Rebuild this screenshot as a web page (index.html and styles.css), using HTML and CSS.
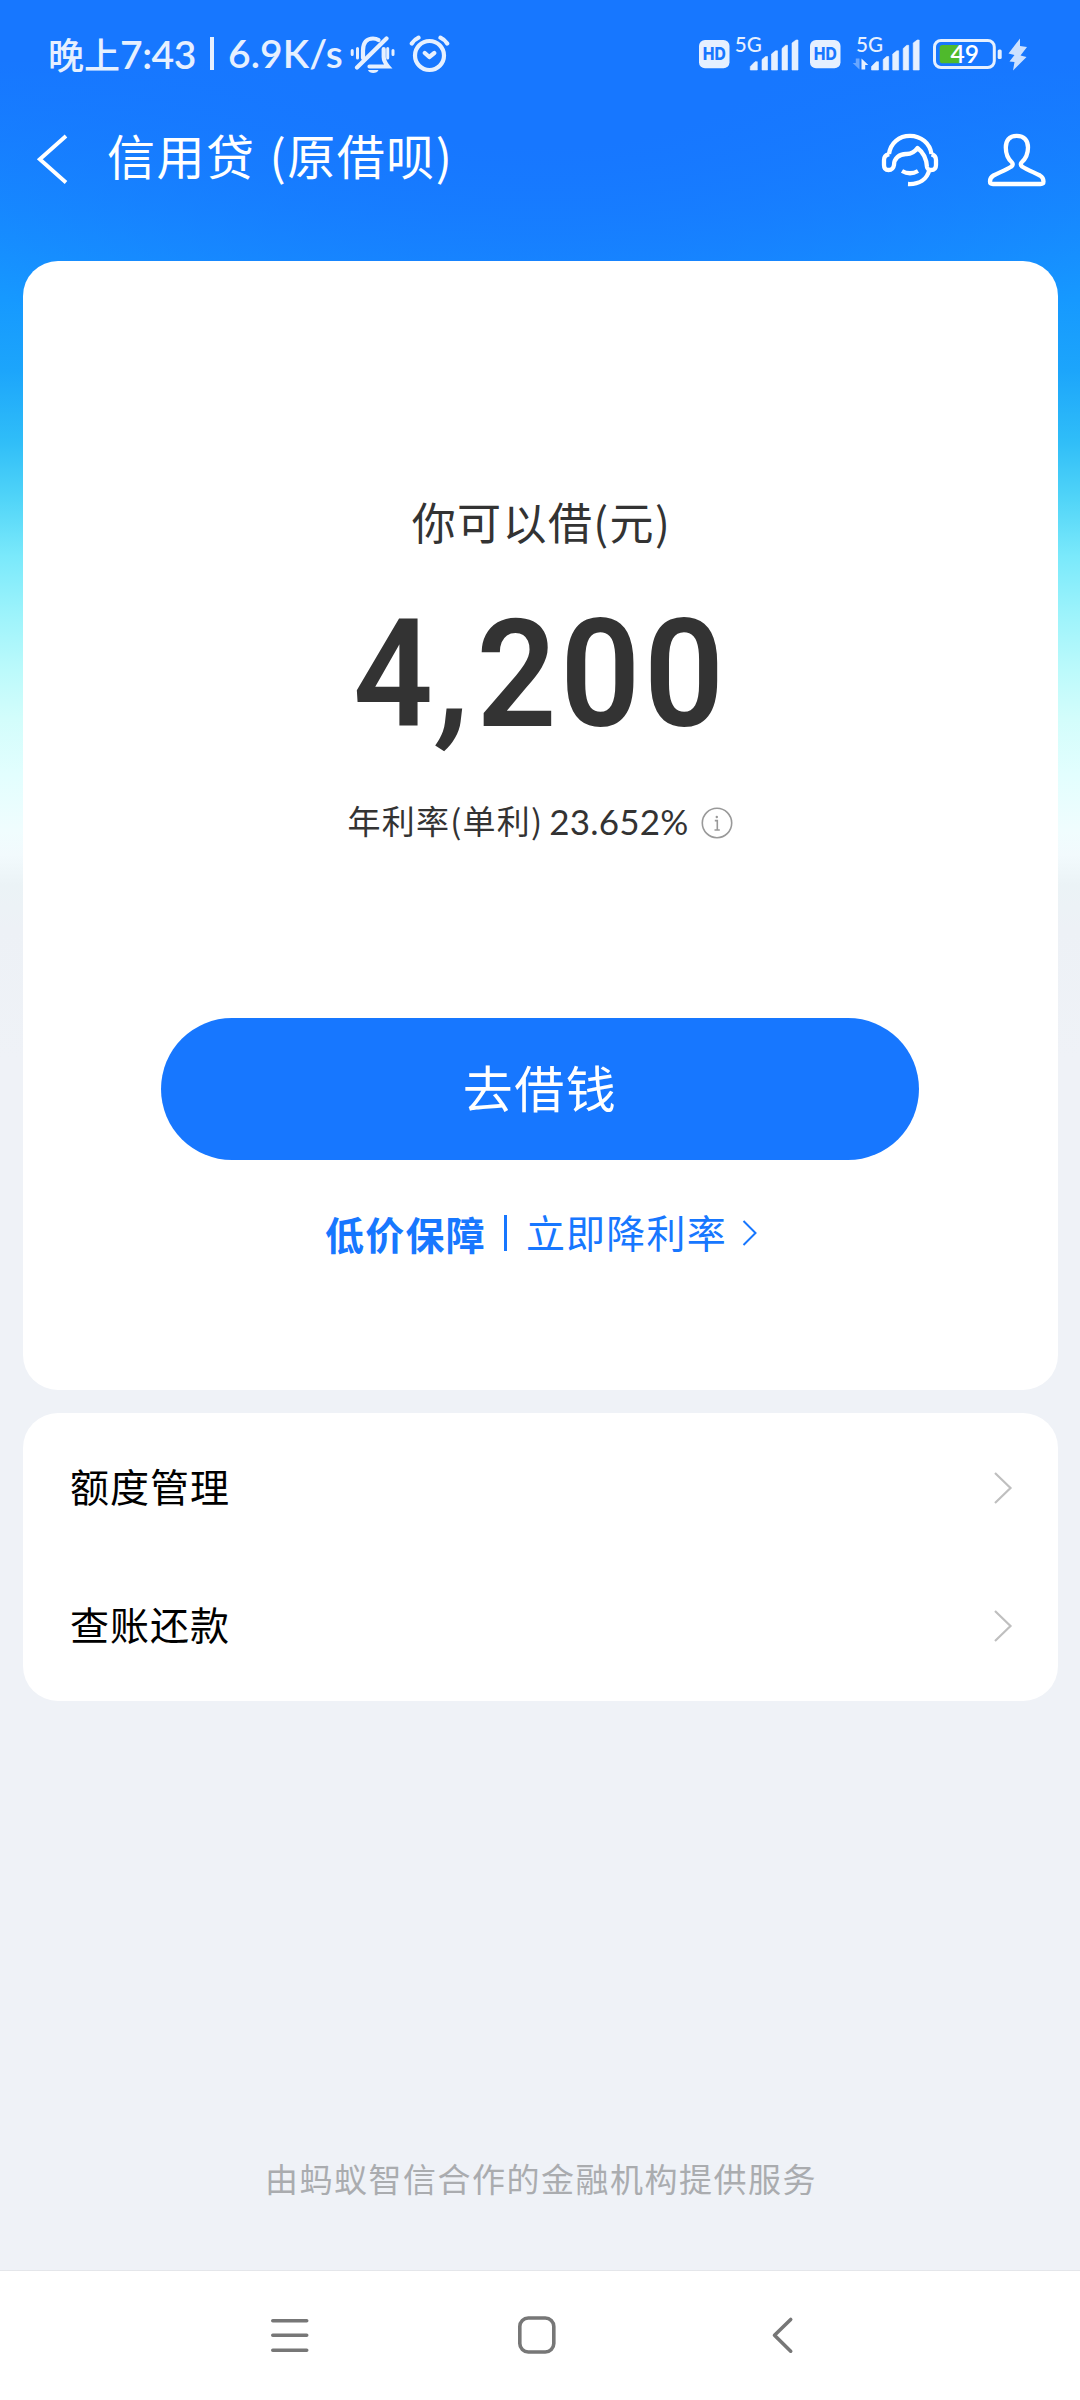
FILE: index.html
```
<!DOCTYPE html>
<html lang="zh-CN">
<head>
<meta charset="utf-8">
<title>信用贷 (原借呗)</title>
<link rel="stylesheet" href="styles.css">
</head>
<body>
<div class="screen">
  <div class="status">
    <span class="time">晚上<b class="clock">7:43</b></span>
    <i class="status-bar"></i>
    <span class="speed">6.9K/s</span>
    <svg class="mute" width="45" height="38" viewBox="350 36 45 38" fill="none" stroke="#e6f0ff" stroke-width="4.200" stroke-linecap="round">
      <path d="M352.200 50.500V54.500M357.500 48.500V58M387.700 48.500V58M393 50.500V54.500" stroke-width="3"/>
      <path d="M357 67.500L386.500 38.500"/>
      <path d="M363 58V50.500C363 42.500 367 38.500 373 38.500C375 38.500 377 39 378.500 40M383.700 49V57C383.700 61 385.500 63.500 388 66.500H369.500"/>
      <path d="M368 70H378.500C377.500 74 369 74 368 70Z" fill="#e6f0ff" stroke="none"/>
    </svg>
    <svg class="alarm" width="41" height="39" viewBox="409 35 41 39" fill="none" stroke="#e6f0ff" stroke-width="4.200" stroke-linecap="round" stroke-linejoin="round">
      <circle cx="429.500" cy="55.500" r="14.500"/>
      <path d="M411.800 43.500Q414.500 39.500 418.500 37.700M447.200 43.500Q444.500 39.500 440.500 37.700M424.800 53L429.300 57L434.300 53"/>
    </svg>
    <svg class="indicators" width="330" height="46" viewBox="699 30 330 46">
      <g fill="#e6f0ff">
        <rect x="699" y="40" width="30.500" height="28.200" rx="6"/>
        <rect x="810" y="40" width="30.500" height="28.200" rx="6"/>
        <g id="bars">
          <path d="M750.300 70V66.500L755 61.700H757.300V70ZM762 70V59.500L765.500 56.500H767.500V70ZM771.500 70V54L775.500 50.800H777.500V70ZM782 70V48.500L785.500 45.300H787.500V70ZM792 70V43L796 40H798V70Z" stroke="#e6f0ff" stroke-width=".6" stroke-linejoin="round"/>
        </g>
        <use href="#bars" x="121.200"/>
        <path d="M861.500 58.500L868.300 65H865.200V69.500H861.500Z"/>
        <path d="M859.500 69.500L852.700 63H855.800V58.500H859.500Z" opacity=".4"/>
        <rect x="997.700" y="49.500" width="4" height="9.500" rx="1.500"/>
        <path d="M1020 38.500L1008.500 53.500L1014.500 55L1009.500 61.500L1014.500 62L1013 70.500L1026.500 57L1020.500 55.500L1027 47L1020 46Z" opacity=".88"/>
      </g>
      <rect x="934.500" y="40.500" width="59.800" height="27" rx="6.500" fill="none" stroke="#e6f0ff" stroke-width="3"/>
      <path d="M960 45V63.200H942.500Q939.700 63.200 939.700 60.400V47.800Q939.700 45 942.500 45Z" fill="#4fba2c"/>
      <text class="hd" x="702.700" y="60" textLength="23" lengthAdjust="spacingAndGlyphs">HD</text>
      <text class="hd" x="813.700" y="60" textLength="23" lengthAdjust="spacingAndGlyphs">HD</text>
      <text class="net" x="734.800" y="52.300" textLength="27" lengthAdjust="spacingAndGlyphs">5G</text>
      <text class="net" x="856" y="52.300" textLength="27" lengthAdjust="spacingAndGlyphs">5G</text>
      <text class="level" x="950.500" y="63" textLength="28.500" lengthAdjust="spacingAndGlyphs">49</text>
    </svg>
  </div>

  <header class="nav">
    <svg class="nav-back" width="32" height="52" viewBox="36 133 32 52" fill="none" stroke="#fff" stroke-width="3.900"><path d="M66 136L39.800 159.300L66 182.500"/></svg>
    <h1 class="nav-title">信用贷<span class="nav-alias">(原借呗)</span></h1>
    <svg class="service" width="60" height="56" viewBox="880 132 60 56" fill="none" stroke="#fff" stroke-width="4.300" stroke-linejoin="round">
      <path d="M889 154C890.500 143 899 135.800 910 135.800C921 135.800 930 143.500 931.500 154"/>
      <path d="M889.500 154.300H888.500Q884 155.500 884 160V165Q884 170 888.500 170Q893.200 170 894 165C894 158.500 899 154 906 154C912 154.300 915 151.500 917.500 148C923.500 152.500 926.500 159 927 167Q927.500 170 931 170Q936 170 936 165V160Q936 155.500 931.500 154.300"/>
      <path d="M902 171Q910 175.500 918 171M929.300 170C927 179.500 919 184.500 908 184"/>
    </svg>
    <svg class="person" width="60" height="56" viewBox="987 132 60 56" fill="none" stroke="#fff" stroke-width="4.300" stroke-linejoin="round">
      <path d="M1016.700 135.800C1009 135.800 1005.800 141 1005.800 147.500C1005.800 154.500 1008 159 1012 162.500Q1013.500 164.500 1011.500 166.500C1005 170.500 999 172.500 993.500 175.500C990.800 177 990 179.500 990 181.500Q990 184 993 184H1040.500Q1043.500 184 1043.500 181.500C1043.500 179 1042.500 177 1040 175.500C1034.500 172.500 1028.500 170.500 1022 166.500Q1020 164.500 1021.500 162.500C1025.500 159 1028 154.500 1028 147.500C1028 141 1024.500 135.800 1016.700 135.800Z"/>
    </svg>
  </header>

  <main class="content">
    <section class="card loan">
      <p class="loan-label">你可以借(元)</p>
      <p class="loan-amount">4<span class="comma">,</span>200</p>
      <p class="rate"><span class="rate-name">年利率(单利)</span><span class="rate-value">23.652%</span>
        <svg class="info" width="32" height="32" viewBox="0 0 32 32" fill="none" stroke="#999" stroke-width="1.600"><circle cx="16" cy="16" r="14.700"/><path d="M13.800 13.600H16.300V23M13.500 23H18.800"/><circle cx="15.800" cy="10" r="1.200" fill="#999" stroke="none"/></svg>
      </p>
      <button class="borrow" type="button">去借钱</button>
      <a class="promo"><strong class="promo-tag">低价保障</strong><i class="promo-divider"></i><span class="promo-text">立即降利率</span>
        <svg class="promo-arrow" width="16" height="28" viewBox="0 0 16 28" fill="none" stroke="#1777ff" stroke-width="2"><path d="M1.500 2L13.500 14L1.500 26"/></svg>
      </a>
    </section>
    <section class="card menu">
      <a class="menu-row"><span>额度管理</span><svg width="20" height="34" viewBox="0 0 20 34" fill="none" stroke="#bfbfbf" stroke-width="2.200"><path d="M2 2L17.500 17L2 32"/></svg></a>
      <a class="menu-row"><span>查账还款</span><svg width="20" height="34" viewBox="0 0 20 34" fill="none" stroke="#bfbfbf" stroke-width="2.200"><path d="M2 2L17.500 17L2 32"/></svg></a>
    </section>
    <p class="provider">由蚂蚁智信合作的金融机构提供服务</p>
  </main>

  <footer class="system">
    <svg width="1080" height="50" viewBox="0 2310 1080 50" fill="none" stroke="#777" stroke-width="3.600" stroke-linecap="round" stroke-linejoin="round">
      <path d="M272.800 2320.700H306.700M272.800 2335.300H306.700M272.800 2350.300H306.700"/>
      <rect x="519.800" y="2318" width="34" height="34" rx="8.500"/>
      <path d="M790.700 2319.500L774.500 2335.300L790.700 2351.200"/>
    </svg>
  </footer>
</div>
</body>
</html>
```
FILE: styles.css
```
* { box-sizing: border-box; margin: 0; padding: 0; }

body {
  font-family: "Noto Sans CJK SC", sans-serif;
  color: #333;
  background: #eff2f7;
}

.screen {
  width: 1080px;
  height: 2400px;
  display: flex;
  flex-direction: column;
  background:
    radial-gradient(ellipse 760px 420px at 50% 0, #1777ff 0, #1777ff 35%, rgba(23, 119, 255, 0) 100%) no-repeat 0 0 / 1080px 430px,
    linear-gradient(180deg, #1777ff 0, #1777ff 60px, #168cff 210px, #1699ff 300px, #1ca5fb 370px, #2fbdf8 440px, #50d4f8 498px, #7ae9fb 556px, #9cf3fb 613px, #bcfafb 671px, #d2fdfb 717px, #e2fefe 774px, #f0fdfe 831px, #f2fafd 855px, #ebf3f6 885px, #edf1f6 930px, #eff2f7 1060px, #eff2f7 100%);
}

/* System status bar */
.status {
  height: 105px;
  padding: 35px 51px 0 48px;
  display: flex;
  align-items: flex-start;
  color: #e6f0ff;
}
.time, .speed {
  font: 500 36px/36px "Noto Sans CJK SC", sans-serif;
  white-space: nowrap;
}
.time { width: 162px; }
.clock, .speed { font-family: Lato, sans-serif; font-size: 39px; font-weight: 600; }
.clock { letter-spacing: -0.5px; }
.speed { width: 121px; margin-left: 14px; letter-spacing: 0.1px; }
.status-bar { width: 4px; height: 33px; margin-top: 2px; background: #e6f0ff; }
.mute { margin: 1px 0 0 1px; }
.alarm { margin-left: 14px; }
.indicators { margin: -5px 0 0 auto; }
.hd { font: 800 17px Inter, sans-serif; fill: #1777ff; }
.net { font: 500 21px Lato, sans-serif; fill: #e6f0ff; }
.level { font: 600 25px Lato, sans-serif; fill: #fff; }

/* Title bar */
.nav {
  height: 156px;
  padding: 28px 33px 0 36px;
  display: flex;
  align-items: flex-start;
  color: #fff;
}
.nav-title {
  margin: -11px 0 0 39px;
  font-size: 48px;
  line-height: 64px;
  font-weight: 400;
  letter-spacing: 1.5px;
  white-space: nowrap;
}
.nav-alias { margin-left: 14px; }
.service { margin: -1px 0 0 auto; }
.person { margin: -1px 0 0 47px; }

.content {
  flex: 1;
  padding: 0 22px 0 23px;
  display: flex;
  flex-direction: column;
}
.card { border-radius: 35px; background: #fff; }

/* Borrowing limit */
.loan {
  height: 1129px;
  padding-top: 229px;
  display: flex;
  flex-direction: column;
  align-items: center;
}
.loan-label { margin-left: 2px; font-size: 44px; line-height: 62px; letter-spacing: 1.4px; }
.loan-amount {
  margin-top: 43px;
  font: 600 150px/160px Roboto, sans-serif;
  letter-spacing: 4px;
  transform: scaleX(0.935);
}
.comma { display: inline-block; margin-left: 4px; letter-spacing: 3px; transform: skewX(-7deg); }
.rate {
  margin-top: 40px;
  height: 50px;
  display: flex;
  align-items: center;
}
.rate-name { font-size: 33px; letter-spacing: 1.2px; }
.rate-value { margin: 1px 0 0 6px; font: 400 35px/50px Lato, sans-serif; letter-spacing: 0.2px; }
.info { margin: 5px 0 0 13px; }
.borrow {
  margin: 173px 1px 0 0;
  width: 758px;
  height: 142px;
  padding-bottom: 7px;
  border: 0;
  border-radius: 71px;
  background: #1777ff;
  color: #fff;
  font: 400 50px/70px "Noto Sans CJK SC", sans-serif;
  letter-spacing: 1.5px;
}
.promo {
  margin: 43px 0 0 2px;
  height: 60px;
  display: flex;
  align-items: center;
  color: #1777ff;
  font-size: 39px;
  line-height: 60px;
  letter-spacing: 1.2px;
}
.promo-tag { font-weight: 700; }
.promo-text { margin-top: -5px; }
.promo-divider { width: 3px; height: 36px; margin: 0 19px 0 18px; background: #1777ff; }
.promo-arrow { margin-left: 15px; }

/* Account entries */
.menu { margin-top: 23px; height: 288px; padding: 6px 45px 6px 47px; }
.menu-row {
  height: 138px;
  display: flex;
  align-items: center;
  justify-content: space-between;
  font-size: 39px;
  letter-spacing: 1px;
  color: #000;
}
.menu-row span { margin-top: -6px; }

.provider {
  margin: auto 0 0 1px;
  padding-bottom: 67px;
  text-align: center;
  font-size: 33px;
  line-height: 50px;
  letter-spacing: 1.5px;
  color: #aaacaf;
}

/* System navigation */
.system {
  height: 130px;
  padding-top: 39px;
  border-top: 1px solid #e4e6ea;
  background: #fff;
}
.system svg { display: block; }
```
